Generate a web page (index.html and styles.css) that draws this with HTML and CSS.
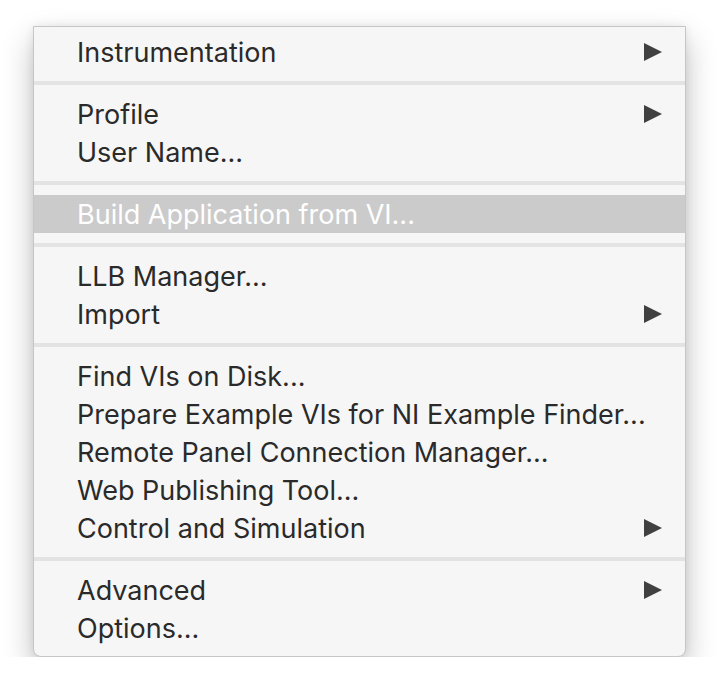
FILE: index.html
```html
<!DOCTYPE html>
<html>
<head>
<meta charset="utf-8">
<link rel="stylesheet" href="styles.css">
</head>
<body>
<div class="menu">
  <div class="item"><span>Instrumentation</span><span class="arrow"></span></div>
  <div class="sep"></div>
  <div class="item"><span>Profile</span><span class="arrow"></span></div>
  <div class="item"><span>User Name...</span></div>
  <div class="sep"></div>
  <div class="item active"><span>Build Application from VI...</span></div>
  <div class="sep"></div>
  <div class="item"><span>LLB Manager...</span></div>
  <div class="item"><span>Import</span><span class="arrow"></span></div>
  <div class="sep"></div>
  <div class="item"><span>Find VIs on Disk...</span></div>
  <div class="item"><span>Prepare Example VIs for NI Example Finder...</span></div>
  <div class="item"><span>Remote Panel Connection Manager...</span></div>
  <div class="item"><span>Web Publishing Tool...</span></div>
  <div class="item"><span>Control and Simulation</span><span class="arrow"></span></div>
  <div class="sep"></div>
  <div class="item"><span>Advanced</span><span class="arrow"></span></div>
  <div class="item"><span>Options...</span></div>
</div>
</body>
</html>
```
FILE: styles.css
```css
html, body {
  margin: 0;
  padding: 0;
  background: #ffffff;
}
body {
  padding: 26px 0 0 33px;
  font-family: Inter, "Liberation Sans", sans-serif;
}
.menu {
  width: 653px;
  box-sizing: border-box;
  background: #f6f6f6;
  border: 1px solid #c6c6c6;
  border-radius: 0 0 8px 8px;
  box-shadow: 0 14px 30px rgba(0, 0, 0, 0.25), 0 0 8px rgba(0, 0, 0, 0.08);
  padding: 6px 0 9px 0;
}
.item {
  height: 38px;
  display: flex;
  align-items: center;
  justify-content: space-between;
  padding: 0 23px 0 43px;
  font-size: 27px;
  color: #2a2a2a;
}
.item.active {
  background: #cbcbcb;
  color: #ffffff;
}
.arrow {
  width: 0;
  height: 0;
  border-top: 9.5px solid transparent;
  border-bottom: 9.5px solid transparent;
  border-left: 18px solid #404040;
}
.sep {
  height: 24px;
  display: flex;
  align-items: center;
}
.sep::before {
  content: "";
  display: block;
  width: 100%;
  height: 4px;
  background: #e3e3e3;
}
```
